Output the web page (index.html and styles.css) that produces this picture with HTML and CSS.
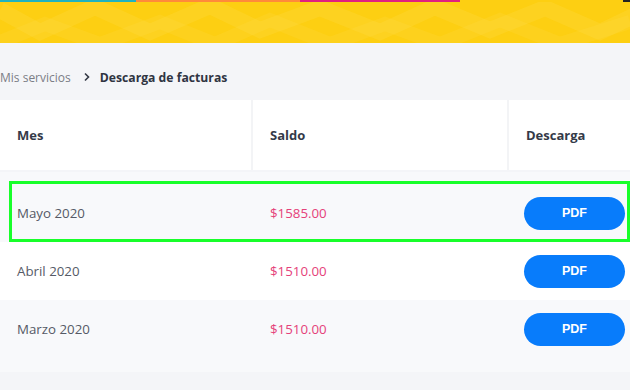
FILE: index.html
```html
<!DOCTYPE html>
<html lang="es">
<head>
<meta charset="utf-8">
<link rel="stylesheet" href="styles.css">
</head>
<body>
<header class="banner">
  <div class="stripe">
    <span class="s-teal"></span><span class="s-orange"></span><span class="s-pink"></span><span class="s-none"></span><span class="s-black"></span>
  </div>
  <svg class="zigzag" width="630" height="41" viewBox="0 0 630 41" preserveAspectRatio="none">
    <polyline points="0,8 40,30 95,5 150,30 210,4 260,28 320,6 380,30 435,5 490,28 545,6 600,30 650,6" fill="none" stroke="#ffe466" stroke-opacity="0.18" stroke-width="16"/>
    <polyline points="0,40 45,22 100,42 160,20 215,42 270,18 330,42 385,22 440,42 500,18 560,42 630,20" fill="none" stroke="#ffe466" stroke-opacity="0.14" stroke-width="14"/>
  </svg>
</header>

<nav class="crumbs">
  <span class="crumb-link">Mis servicios</span>
  <svg class="chev" width="8" height="10" viewBox="0 0 8 10"><polyline points="2,1.5 5.5,5 2,8.5" fill="none" stroke="#333845" stroke-width="1.6"/></svg>
  <span class="crumb-current">Descarga de facturas</span>
</nav>

<section class="table">
  <div class="thead">
    <div class="th c1">Mes</div>
    <div class="th c2">Saldo</div>
    <div class="th c3">Descarga</div>
  </div>
  <div class="tbody">
    <div class="tr tint">
      <div class="td c1">Mayo 2020</div>
      <div class="td c2 money">$1585.00</div>
      <div class="td c3"><button class="pdf">PDF</button></div>
    </div>
    <div class="tr white">
      <div class="td c1">Abril 2020</div>
      <div class="td c2 money">$1510.00</div>
      <div class="td c3"><button class="pdf">PDF</button></div>
    </div>
    <div class="tr tint">
      <div class="td c1">Marzo 2020</div>
      <div class="td c2 money">$1510.00</div>
      <div class="td c3"><button class="pdf">PDF</button></div>
    </div>
  </div>
  <div class="highlight"></div>
</section>
</body>
</html>
```
FILE: styles.css
```css
* { box-sizing: border-box; }
html, body { margin: 0; padding: 0; }
body {
  width: 630px;
  height: 390px;
  overflow: hidden;
  background: #f4f5f8;
  font-family: "Open Sans", "Noto Sans", sans-serif;
  position: relative;
}
.banner {
  height: 43px;
  background: #fdcf12;
  position: relative;
  overflow: hidden;
}
.stripe {
  display: flex;
  height: 2px;
  position: relative;
  z-index: 2;
}
.stripe span { display: block; height: 2px; }
.s-teal { width: 136px; background: #1fb2be; }
.s-orange { width: 164px; background: #ff8a3a; }
.s-pink { width: 160px; background: #e0207f; }
.s-none { width: 163px; }
.s-black { width: 7px; background: #222; }
.zigzag {
  position: absolute;
  left: 0;
  top: 2px;
}
.crumbs {
  height: 57px;
  display: flex;
  align-items: center;
  padding-top: 11px;
  font-size: 12px;
}
.crumb-link { color: #7b7d86; }
.chev { margin: 0 9px 0 12px; }
.crumb-current { color: #2f3442; font-weight: 700; font-size: 12.2px; }

.table { position: relative; }
.thead {
  display: flex;
  height: 70px;
  gap: 2px;
  background: #f3f4f6;
}
.th {
  background: #fff;
  display: flex;
  align-items: center;
  padding-left: 17px;
  font-size: 13px;
  font-weight: 700;
  color: #343a48;
}
.c1 { width: 251px; }
.c2 { width: 254px; }
.c3 { flex: 1; }
.tbody {
  margin-top: 2px;
  background: #f8f9fb;
  padding: 12px 0 14px;
}
.tr {
  display: flex;
  height: 58px;
  gap: 2px;
}
.tr.white { background: #fff; }
.td {
  display: flex;
  align-items: center;
  padding-left: 17px;
  font-size: 13.3px;
  color: #555a66;
}
.money { color: #e5417a; }
.td.c3 { padding-left: 15px; }
.pdf {
  width: 101px;
  height: 33px;
  border: 0;
  border-radius: 17px;
  background: #087cfb;
  color: #fff;
  font-family: "Liberation Sans", Arial, sans-serif;
  font-weight: 700;
  font-size: 12.5px;
  padding: 0;
}
.highlight {
  position: absolute;
  left: 9px;
  top: 81px;
  width: 621px;
  height: 61px;
  border: 3px solid #18ff2a;
  pointer-events: none;
}
```
